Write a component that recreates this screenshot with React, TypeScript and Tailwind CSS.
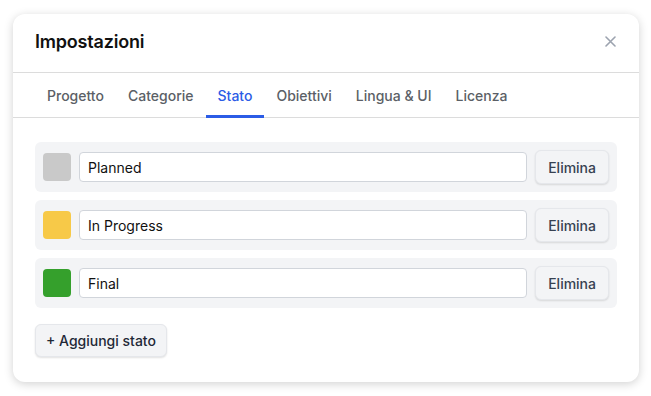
import React, { useState } from "react";

const tabs = ["Progetto", "Categorie", "Stato", "Obiettivi", "Lingua & UI", "Licenza"];

const initialStates = [
  { id: 1, name: "Planned", color: "#c9c9c9" },
  { id: 2, name: "In Progress", color: "#f7c948" },
  { id: 3, name: "Final", color: "#35a02c" },
];

export default function App() {
  const [active, setActive] = useState("Stato");
  const [states, setStates] = useState(initialStates);

  const rename = (id: number, name: string) =>
    setStates((s) => s.map((x) => (x.id === id ? { ...x, name } : x)));

  return (
    <div
      className="min-h-[396px] bg-white pt-[14px] pl-[13px]"
      style={{ fontFamily: "Inter, 'Noto Sans', sans-serif" }}
    >
      <div className="w-[626px] rounded-xl bg-white shadow-[0_2px_10px_rgba(0,0,0,0.18)]">
        {/* header */}
        <div className="flex h-[59px] items-center justify-between border-b border-[#dcdcdc] px-[22px] pb-[3px]">
          <h1 className="text-[18px] font-semibold tracking-[-0.2px] text-[#111]">Impostazioni</h1>
          <button className="mr-[1px] text-[#9ca3af]">
            <svg width="11" height="11" viewBox="0 0 11 11" fill="none" stroke="currentColor" strokeWidth="1.6" strokeLinecap="round">
              <path d="M1 1L10 10M10 1L1 10" />
            </svg>
          </button>
        </div>

        {/* tabs */}
        <div className="flex border-b border-[#dcdcdc] px-[22px]">
          {tabs.map((t) => (
            <button
              key={t}
              onClick={() => setActive(t)}
              className={
                t === active
                  ? "-mb-px h-[45px] border-b-[3px] border-[#2b5ce6] px-3 pt-[3px] text-[14px] font-medium text-[#2b5ce6]"
                  : "-mb-px h-[45px] border-b-[3px] border-transparent px-3 pt-[3px] text-[14px] font-medium text-[#5b5f66]"
              }
            >
              {t}
            </button>
          ))}
        </div>

        {/* body */}
        <div className="px-[22px] pt-[24px] pb-[25px]">
          <div className="flex flex-col gap-2">
            {states.map((s) => (
              <div key={s.id} className="flex h-[50px] items-center gap-2 rounded-md bg-[#f3f4f6] px-2">
                <div className="h-7 w-7 shrink-0 rounded" style={{ backgroundColor: s.color }} />
                <input
                  value={s.name}
                  onChange={(e) => rename(s.id, e.target.value)}
                  className="h-[30px] min-w-0 flex-1 rounded border border-[#d1d5db] bg-white px-2 text-[14px] text-[#111] outline-none"
                />
                <button
                  onClick={() => setStates((all) => all.filter((x) => x.id !== s.id))}
                  className="h-[34px] rounded-md border border-[#e5e7eb] bg-[#f3f4f6] px-3 text-[14px] font-medium text-[#374151] shadow-[0_1px_2px_rgba(0,0,0,0.12)]"
                >
                  Elimina
                </button>
              </div>
            ))}
          </div>
          <button
            onClick={() =>
              setStates((all) => [...all, { id: Date.now(), name: "Nuovo stato", color: "#9ca3af" }])
            }
            className="mt-4 h-[33px] rounded-md border border-[#e5e7eb] bg-[#f3f4f6] px-[10px] text-[14px] font-medium text-[#1f2937] shadow-[0_1px_2px_rgba(0,0,0,0.12)]"
          >
            + Aggiungi stato
          </button>
        </div>
      </div>
    </div>
  );
}
